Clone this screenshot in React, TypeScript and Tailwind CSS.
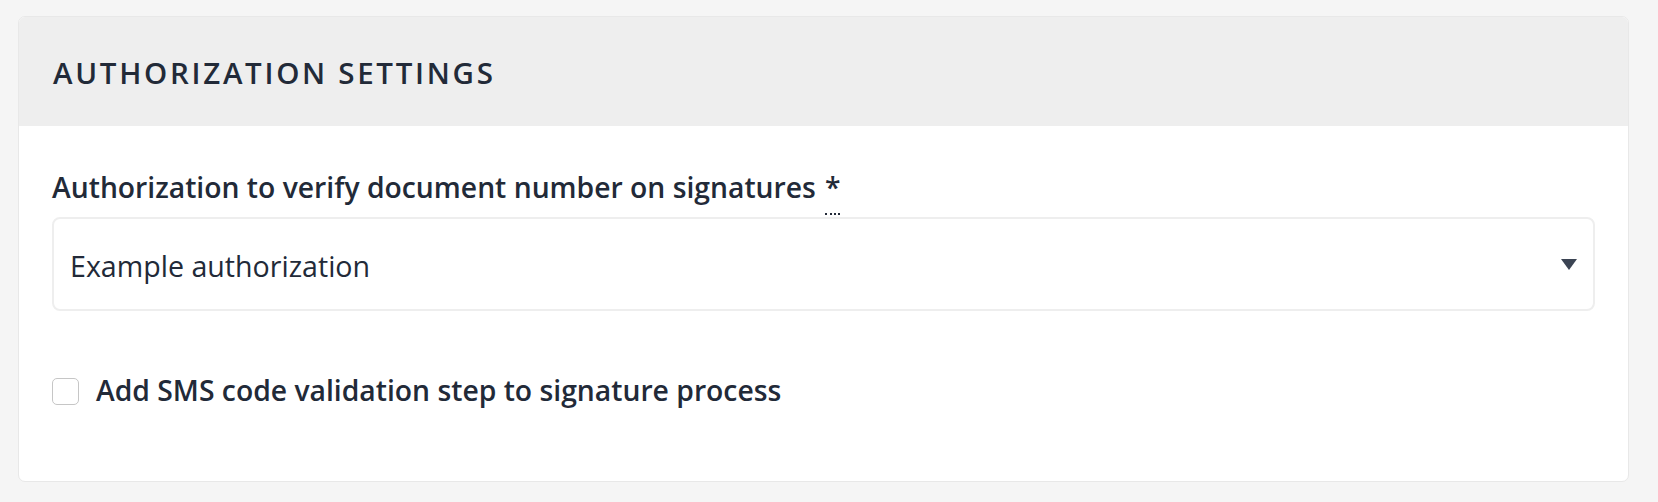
import React from "react";

const font = { fontFamily: '"Open Sans", "Noto Sans", sans-serif' };

export default function App() {
  return (
    <div
      className="min-h-[502px] bg-[#f5f5f5] pt-[16px] pl-[18px] pr-[29px] pb-[21px] text-[#222a38]"
      style={font}
    >
      <div className="rounded-[7px] border border-[#e8e8e8] bg-white overflow-hidden">
        <div className="h-[109px] bg-[#eeeeee] flex items-center px-[34px] pt-[2px]">
          <h2 className="text-[29.5px] leading-[41px] font-semibold tracking-[2.7px] text-[#222a38]">
            AUTHORIZATION SETTINGS
          </h2>
        </div>
        <div className="px-[33px] pt-[42px] pb-[72px]">
          <div className="flex items-start h-[38px]">
            <label className="text-[28.3px] leading-[38px] font-semibold text-[#222a38]">
              Authorization to verify document number on signatures
            </label>
            <span className="ml-[9px] inline-block h-[47px] border-b-2 border-dotted border-[#222a38] text-[28.3px] leading-[38px] font-semibold">
              *
            </span>
          </div>
          <div className="mt-[11px] h-[94px] rounded-[8px] border-2 border-[#eeeeee] bg-white flex items-center justify-between pl-[16px] pr-[16px]">
            <span className="text-[28.6px] leading-[39px] pt-[2px] text-[#222a38]">
              Example authorization
            </span>
            <svg width="16" height="11" viewBox="0 0 16 11" className="mt-[1px]">
              <polygon points="0,0 16,0 8,11" fill="#3b4453" />
            </svg>
          </div>
          <div className="mt-[60px] flex items-start">
            <span className="mt-[7px] w-[27px] h-[27px] rounded-[5px] border-[1.5px] border-[#c6c6c6] bg-white shrink-0" />
            <span className="ml-[17px] text-[28.3px] leading-[38px] font-semibold text-[#222a38]">
              Add SMS code validation step to signature process
            </span>
          </div>
        </div>
      </div>
    </div>
  );
}
